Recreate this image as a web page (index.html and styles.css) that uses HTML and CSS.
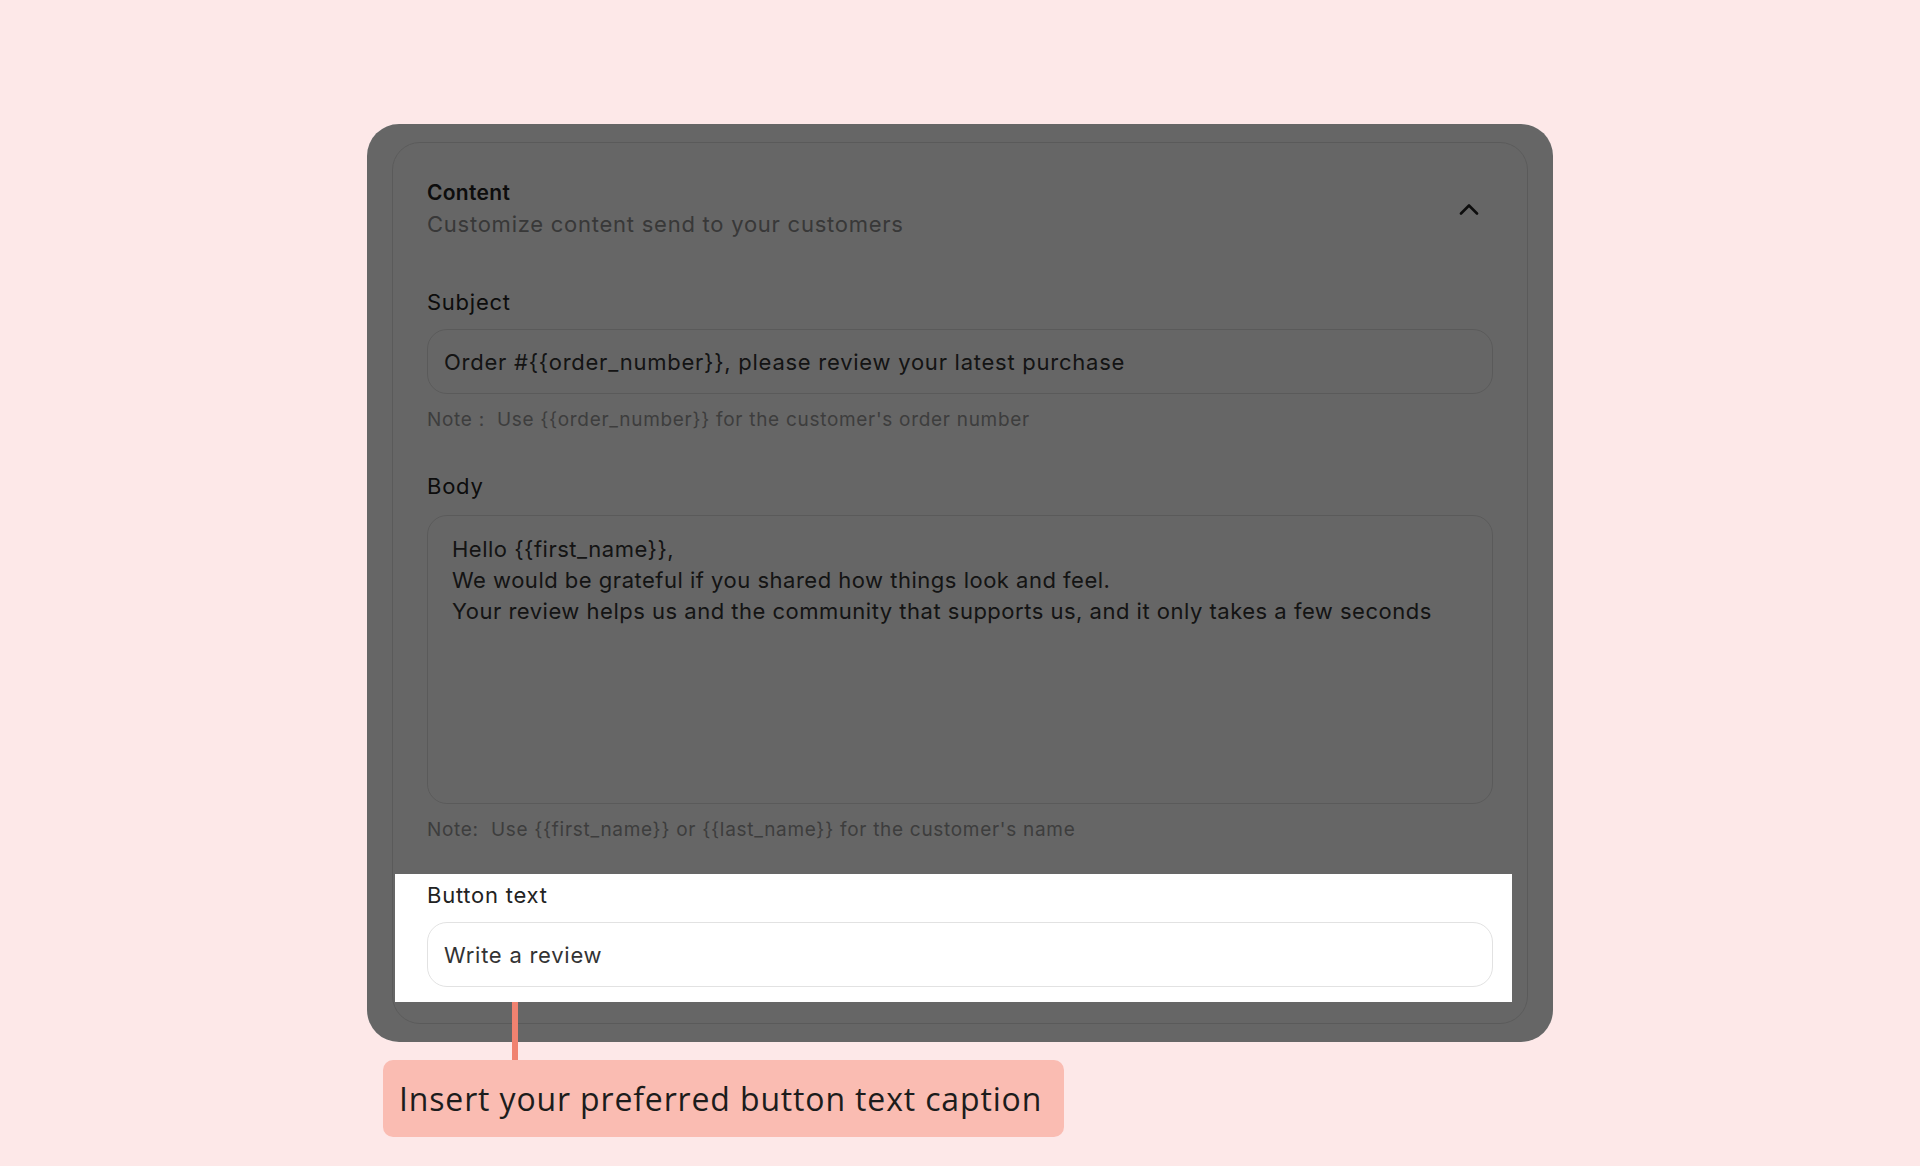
FILE: index.html
```html
<!DOCTYPE html>
<html lang="en">
<head>
  <meta charset="UTF-8">
  <title>Content - Button text</title>
  <link rel="stylesheet" href="styles.css">
</head>
<body>
  <div class="page">
    <!-- Card with dimmed settings, button text is highlighted -->
    <div class="card">
      <div class="panel">
        <div class="panel-head">
          <div>
            <div class="panel-title">Content</div>
            <div class="panel-sub">Customize content send to your customers</div>
          </div>
          <svg class="chevron" width="20" height="12" viewBox="0 0 20 12">
            <path d="M2 10.5 L10 2.5 L18 10.5" fill="none" stroke="#222" stroke-width="2.6" stroke-linecap="round" stroke-linejoin="round"/>
          </svg>
        </div>

        <div class="field">
          <div class="label">Subject</div>
          <div class="input">Order #{{order_number}}, please review your latest purchase</div>
          <div class="note">Note :&nbsp; Use {{order_number}} for the customer's order number</div>
        </div>

        <div class="field body-field">
          <div class="label">Body</div>
          <div class="textarea">
            <div>Hello {{first_name}},</div>
            <div>We would be grateful if you shared how things look and feel.</div>
            <div>Your review helps us and the community that supports us, and it only takes a few seconds</div>
          </div>
          <div class="note">Note:&nbsp; Use {{first_name}} or {{last_name}} for the customer's name</div>
        </div>

        <div class="field spotlight">
          <div class="label">Button text</div>
          <div class="input">Write a review</div>
        </div>
      </div>
    </div>

    <div class="callout">Insert your preferred button text caption</div>
  </div>
</body>
</html>
```

FILE: styles.css
```css
body {
  margin: 0;
  background: #fde8e8;
  font-family: 'Inter', 'Liberation Sans', sans-serif;
  color: #222;
}

.page {
  width: 1186px;
  margin: 124px auto 0;
}

.card {
  background: #fff;
  border-radius: 32px;
  padding: 18px 25px;
  overflow: hidden;
}

.panel {
  border: 1px solid #e2e2e2;
  border-radius: 28px;
  padding: 35px 34px 21px;
}

.panel-head {
  display: flex;
  justify-content: space-between;
  align-items: center;
  margin-bottom: 48px;
}

.panel-head .chevron {
  margin-right: 14px;
}

.panel-title {
  font-size: 21px;
  font-weight: 600;
  line-height: 30px;
  color: #222;
  letter-spacing: 0.3px;
}

.panel-sub {
  margin-top: 1px;
  font-size: 22px;
  line-height: 30px;
  color: #8c8c8c;
  letter-spacing: 0.75px;
}

.label {
  font-size: 22px;
  font-weight: 400;
  line-height: 30px;
  color: #222;
  letter-spacing: 0.75px;
  margin-bottom: 12px;
}

.input {
  height: 65px;
  box-sizing: border-box;
  border: 1px solid #e2e2e2;
  border-radius: 20px;
  padding: 0 16px;
  display: flex;
  align-items: center;
  font-size: 22px;
  color: #333;
  letter-spacing: 0.75px;
}

.note {
  margin-top: 13px;
  font-size: 19px;
  line-height: 26px;
  color: #9a9a9a;
  letter-spacing: 0.7px;
}

.body-field {
  margin-top: 38px;
}

.body-field .label {
  margin-bottom: 14px;
}

.textarea {
  height: 251px;
  border: 1px solid #e2e2e2;
  border-radius: 20px;
  padding: 18px 24px;
  font-size: 22px;
  line-height: 31px;
  color: #333;
  letter-spacing: 0.5px;
}

/* highlighted field, the rest of the card is dimmed */
.spotlight {
  margin: 31px -19px 0 -32px;
  padding: 6px 19px 15px 32px;
  background: #fff;
  position: relative;
  box-shadow: 0 0 0 3000px rgba(0, 0, 0, 0.6);
}

.callout {
  position: relative;
  display: inline-block;
  margin: 18px 0 0 16px;
  height: 77px;
  line-height: 77px;
  padding: 0 22px 0 16px;
  background: #fabcb2;
  border-radius: 10px;
  font-family: 'Open Sans', 'Noto Sans', sans-serif;
  font-size: 32px;
  font-weight: 500;
  letter-spacing: 0.85px;
  color: #1c1c1c;
}

.callout::before {
  content: "";
  position: absolute;
  left: 129px;
  top: -58px;
  width: 6px;
  height: 58px;
  background: #f08270;
}
```
